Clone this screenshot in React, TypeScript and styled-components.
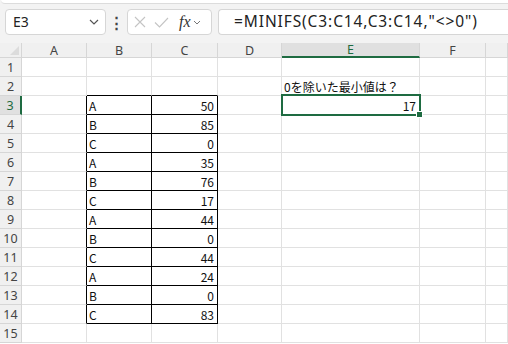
import React from 'react';
import styled, { createGlobalStyle } from 'styled-components';

const GREEN = '#1e6b41';
const GRID = '#e1e1e1';

// row header, A..F, then the part of G that is still on screen
const colWidths = ['22px', '65px', '65px', '66px', '64px', '138px', '66px', '1fr'];
const colNames = ['A', 'B', 'C', 'D', 'E', 'F', ''];
const ROWS = 15;

const tableRows: [string, number][] = [
  ['A', 50],
  ['B', 85],
  ['C', 0],
  ['A', 35],
  ['B', 76],
  ['C', 17],
  ['A', 44],
  ['B', 0],
  ['C', 44],
  ['A', 24],
  ['B', 0],
  ['C', 83],
];

// table occupies columns B..C (index 1..2), rows 3..14
const isBoxed = (col: number, row: number) =>
  col >= 1 && col <= 2 && row >= 3 && row <= 14;

const cellValue = (col: number, row: number): { text: string; right?: boolean } | null => {
  if (isBoxed(col, row)) {
    const [label, num] = tableRows[row - 3];
    return col === 1 ? { text: label } : { text: String(num), right: true };
  }
  if (col === 4 && row === 2) return { text: '0を除いた最小値は？' };
  if (col === 4 && row === 3) return { text: '17', right: true };
  return null;
};

const App: React.FC = () => {
  return (
    <>
      <GlobalStyle />
      <Window>
        <RibbonEdge />
        <Toolbar>
          <NameBox>
            <NameText>E3</NameText>
            <Chevron viewBox="0 0 10 6">
              <path d="M1 1l4 4 4-4" />
            </Chevron>
          </NameBox>
          <Dots>⋮</Dots>
          <FxBox>
            <svg width="12" height="12" viewBox="0 0 12 12">
              <path d="M1 1l10 10M11 1L1 11" stroke="#c4c4c4" strokeWidth="1.1" fill="none" />
            </svg>
            <svg width="15" height="11" viewBox="0 0 15 11">
              <path d="M1 5.5l4.5 4.5L14 1" stroke="#c4c4c4" strokeWidth="1.1" fill="none" />
            </svg>
            <FxLabel>fx</FxLabel>
            <SmallChevron viewBox="0 0 8 5">
              <path d="M1 1l3 3 3-3" />
            </SmallChevron>
          </FxBox>
          <FormulaBar>
            <FormulaText>=MINIFS(C3:C14,C3:C14,"&lt;&gt;0")</FormulaText>
          </FormulaBar>
        </Toolbar>
        <Sheet>
          <Corner>
            <CornerMark />
          </Corner>
          {colNames.map((name, i) => (
            <ColHeader key={i} $active={name === 'E'}>
              {name}
            </ColHeader>
          ))}
          {Array.from({ length: ROWS }, (_, r) => {
            const row = r + 1;
            return (
              <React.Fragment key={row}>
                <RowHeader $active={row === 3}>{row}</RowHeader>
                {colNames.map((_, c) => {
                  const value = cellValue(c, row);
                  const selected = c === 4 && row === 3;
                  const darkRight = isBoxed(c, row) || isBoxed(c + 1, row);
                  const darkBottom = isBoxed(c, row) || isBoxed(c, row + 1);
                  return (
                    <Cell
                      key={c}
                      $right={value?.right}
                      $darkRight={darkRight}
                      $darkBottom={darkBottom}
                      $overflow={(c === 4 && row === 2) || selected}
                    >
                      {value?.text}
                      {selected && (
                        <Selection>
                          <FillHandle />
                        </Selection>
                      )}
                    </Cell>
                  );
                })}
              </React.Fragment>
            );
          })}
        </Sheet>
      </Window>
    </>
  );
};

export default App;

const GlobalStyle = createGlobalStyle`
  html, body {
    margin: 0;
    padding: 0;
    background: #ffffff;
  }
  body {
    font-family: "Noto Sans CJK JP", "Noto Sans", sans-serif;
  }
`;

const Window = styled.div`
  width: 508px;
  height: 344px;
  overflow: hidden;
  background: #f3f3f3;
  display: flex;
  flex-direction: column;
`;

const RibbonEdge = styled.div`
  height: 3px;
  background: #ffffff;
  border-bottom: 1px solid #dcdcdc;
  border-bottom-left-radius: 6px;
  margin-left: 1px;
`;

const Toolbar = styled.div`
  height: 39px;
  flex-shrink: 0;
  display: flex;
  align-items: flex-start;
  padding: 5px 0 0 5px;
  box-sizing: border-box;
`;

const Box = styled.div`
  height: 26px;
  box-sizing: border-box;
  background: #ffffff;
  border: 1px solid #d6d6d6;
  border-radius: 4px;
  display: flex;
  align-items: center;
`;

const NameBox = styled(Box)`
  width: 101px;
  padding: 0 6px 0 7px;
  justify-content: space-between;
`;

const NameText = styled.span`
  font-family: "Noto Sans", sans-serif;
  font-size: 14px;
  color: #222;
  line-height: 1;
`;

const Chevron = styled.svg`
  width: 10px;
  height: 6px;
  fill: none;
  stroke: #555;
  stroke-width: 1.2;
`;

const Dots = styled.div`
  width: 21px;
  text-align: center;
  font-size: 15px;
  font-weight: bold;
  color: #444;
  line-height: 26px;
`;

const FxBox = styled(Box)`
  width: 85px;
  padding: 0 4px 0 6px;
  gap: 8px;
`;

const FxLabel = styled.span`
  font-family: "Liberation Serif", serif;
  font-style: italic;
  font-size: 16px;
  color: #333;
  line-height: 1;
  margin-left: 2px;
`;

const SmallChevron = styled.svg`
  width: 8px;
  height: 5px;
  fill: none;
  stroke: #777;
  stroke-width: 1;
  margin-left: -6px;
`;

const FormulaBar = styled(Box)`
  flex: 1;
  margin-left: 6px;
  border-top-right-radius: 0;
  border-bottom-right-radius: 0;
  border-right: none;
  padding-left: 15px;
`;

const FormulaText = styled.span`
  font-family: "Noto Sans", sans-serif;
  font-size: 15.5px;
  letter-spacing: 0.9px;
  color: #222;
  line-height: 1;
  white-space: nowrap;
`;

const Sheet = styled.div`
  flex: 1;
  display: grid;
  grid-template-columns: ${colWidths.join(' ')};
  grid-template-rows: 15px;
  grid-auto-rows: 19px;
  background: #ffffff;
  color: #111;
`;

const HeaderBase = styled.div`
  box-sizing: border-box;
  background: #f0f0f0;
  border-right: 1px solid #d6d6d6;
  border-bottom: 1px solid #d6d6d6;
  color: #444;
  display: flex;
  align-items: center;
  justify-content: center;
  font-family: "Noto Sans", sans-serif;
  font-size: 12.5px;
  line-height: 13px;
`;

const Corner = styled(HeaderBase)`
  position: relative;
`;

const CornerMark = styled.div`
  position: absolute;
  right: 2px;
  bottom: 2px;
  width: 0;
  height: 0;
  border-left: 9px solid transparent;
  border-bottom: 9px solid #dcdcdc;
`;

const ColHeader = styled(HeaderBase)<{ $active?: boolean }>`
  background: ${(p) => (p.$active ? '#e0e0e0' : '#f0f0f0')};
  color: ${(p) => (p.$active ? GREEN : '#444')};
  border-bottom: ${(p) => (p.$active ? `2px solid ${GREEN}` : '1px solid #d6d6d6')};
`;

const RowHeader = styled(HeaderBase)<{ $active?: boolean }>`
  background: ${(p) => (p.$active ? '#e0e0e0' : '#f0f0f0')};
  color: ${(p) => (p.$active ? GREEN : '#444')};
  border-right: ${(p) => (p.$active ? `2px solid ${GREEN}` : '1px solid #d6d6d6')};
  padding-top: 1px;
`;

const Cell = styled.div<{
  $right?: boolean;
  $darkRight?: boolean;
  $darkBottom?: boolean;
  $overflow?: boolean;
}>`
  position: relative;
  box-sizing: border-box;
  border-right: 1px solid ${(p) => (p.$darkRight ? '#000' : GRID)};
  border-bottom: 1px solid ${(p) => (p.$darkBottom ? '#000' : GRID)};
  display: flex;
  align-items: center;
  justify-content: ${(p) => (p.$right ? 'flex-end' : 'flex-start')};
  padding: 2px 3px 0 2px;
  white-space: nowrap;
  overflow: ${(p) => (p.$overflow ? 'visible' : 'hidden')};
  font-family: "Noto Sans CJK JP", sans-serif;
  font-size: 12px;
  line-height: 1;
  color: #111;
`;

const Selection = styled.div`
  position: absolute;
  z-index: 3;
  top: -2px;
  left: -1px;
  right: -2px;
  bottom: -2px;
  border: 2px solid ${GREEN};
  pointer-events: none;
`;

const FillHandle = styled.div`
  position: absolute;
  right: -4px;
  bottom: -4px;
  width: 5px;
  height: 5px;
  background: ${GREEN};
  border: 1px solid #ffffff;
`;
